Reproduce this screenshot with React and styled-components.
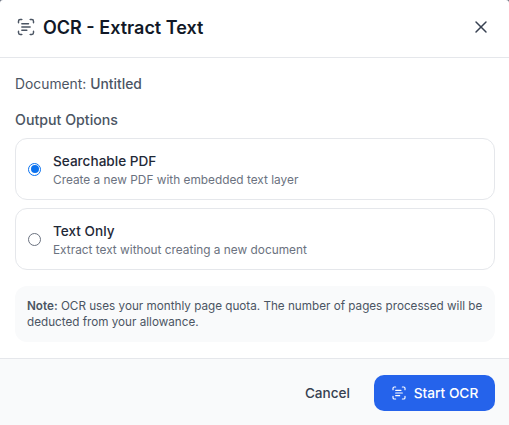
import React from "react";
import styled, { createGlobalStyle } from "styled-components";
import { ScanText, X } from "lucide-react";

const Global = createGlobalStyle`
  html, body { margin: 0; padding: 0; background: #6b7280; }
  * { box-sizing: border-box; }
  #root { font-family: Inter, "Noto Sans", sans-serif; }
`;

const Dialog = styled.div`
  width: 509px;
  height: 425px;
  display: flex;
  flex-direction: column;
  background: #fff;
  border-radius: 3px 3px 0 0;
  overflow: hidden;
`;

const Header = styled.header`
  height: 58px;
  flex: none;
  display: flex;
  align-items: center;
  justify-content: space-between;
  padding: 0 18px 3px 16px;
  border-bottom: 1px solid #e5e7eb;
`;

const TitleGroup = styled.div`
  display: flex;
  align-items: center;
  gap: 7px;
  color: #4b5563;
`;

const Title = styled.h2`
  margin: 0;
  font-size: 18px;
  font-weight: 600;
  color: #111827;
`;

const CloseButton = styled.button`
  display: flex;
  padding: 0;
  border: 0;
  background: none;
  color: #374151;
`;

const Body = styled.main`
  flex: 1;
  display: flex;
  flex-direction: column;
  padding: 18px 14px 0 15px;
`;

const DocumentLine = styled.p`
  margin: 0 0 18px;
  font-size: 13.85px;
  line-height: 17px;
  color: #4b5563;
  b { font-weight: 500; }
`;

const SectionLabel = styled.div`
  font-size: 14.2px;
  font-weight: 500;
  line-height: 18px;
  color: #4b5563;
  margin-bottom: 9px;
`;

const Options = styled.div`
  display: flex;
  flex-direction: column;
  gap: 8px;
`;

const Option = styled.label`
  height: 62px;
  display: flex;
  align-items: center;
  gap: 12px;
  padding: 2px 12px 0;
  border: 1px solid #e5e7eb;
  border-radius: 12px;
`;

const Radio = styled.span`
  width: 13px;
  height: 13px;
  flex: none;
  margin-top: -2px;
  border-radius: 50%;
  border: ${(p) => (p.$on ? "1.5px solid #0b72ef" : "1px solid #6b7280")};
  background: #fff;
  display: flex;
  align-items: center;
  justify-content: center;
  &::after {
    content: "";
    width: 8px;
    height: 8px;
    border-radius: 50%;
    background: ${(p) => (p.$on ? "#0b72ef" : "transparent")};
  }
`;

const OptionText = styled.div`
  display: flex;
  flex-direction: column;
  gap: 2px;
`;

const OptionTitle = styled.span`
  font-size: 13.6px;
  font-weight: 500;
  line-height: 17px;
  color: #1f2937;
`;

const OptionDesc = styled.span`
  font-size: 11.85px;
  line-height: 16px;
  color: #6b7280;
`;

const Note = styled.div`
  margin-top: 16px;
  height: 56px;
  padding: 12px;
  border-radius: 12px;
  background: #f9fafb;
  font-size: 11.7px;
  line-height: 16px;
  color: #4b5563;
  b { font-weight: 600; }
`;

const Footer = styled.footer`
  height: 67px;
  flex: none;
  display: flex;
  align-items: center;
  justify-content: flex-end;
  gap: 24px;
  padding: 1px 14px 0 0;
  background: #f9fafb;
  border-top: 1px solid #e5e7eb;
`;

const CancelButton = styled.button`
  padding: 0;
  border: 0;
  background: none;
  font: 500 13.6px Inter, "Noto Sans", sans-serif;
  color: #374151;
`;

const PrimaryButton = styled.button`
  width: 121px;
  height: 36px;
  display: flex;
  align-items: center;
  justify-content: center;
  gap: 7px;
  padding: 0;
  border: 0;
  border-radius: 10px;
  background: #2563eb;
  color: #fff;
  font: 500 13.7px Inter, "Noto Sans", sans-serif;
`;

export default function App() {
  return (
    <>
      <Global />
      <Dialog>
        <Header>
          <TitleGroup>
            <ScanText size={20} strokeWidth={1.75} />
            <Title>OCR - Extract Text</Title>
          </TitleGroup>
          <CloseButton aria-label="Close"><X size={20} strokeWidth={1.75} /></CloseButton>
        </Header>
        <Body>
          <DocumentLine>Document: <b>Untitled</b></DocumentLine>
          <SectionLabel>Output Options</SectionLabel>
          <Options>
            <Option>
              <Radio $on />
              <OptionText>
                <OptionTitle>Searchable PDF</OptionTitle>
                <OptionDesc>Create a new PDF with embedded text layer</OptionDesc>
              </OptionText>
            </Option>
            <Option>
              <Radio />
              <OptionText>
                <OptionTitle>Text Only</OptionTitle>
                <OptionDesc>Extract text without creating a new document</OptionDesc>
              </OptionText>
            </Option>
          </Options>
          <Note>
            <b>Note:</b> OCR uses your monthly page quota. The number of pages processed will be deducted from your allowance.
          </Note>
        </Body>
        <Footer>
          <CancelButton>Cancel</CancelButton>
          <PrimaryButton><ScanText size={16} strokeWidth={1.75} />Start OCR</PrimaryButton>
        </Footer>
      </Dialog>
    </>
  );
}
